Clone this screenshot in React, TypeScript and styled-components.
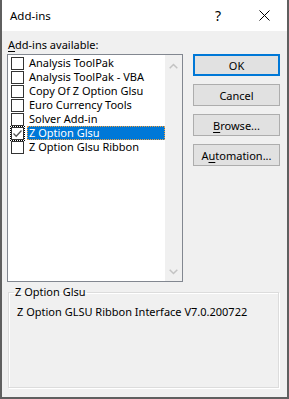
import React from "react";
import styled, { createGlobalStyle } from "styled-components";

const Global = createGlobalStyle`
  html, body { margin: 0; padding: 0; background: #5f5f5f; }
  * { box-sizing: border-box; }
`;

const FONT = `"Noto Sans", "Open Sans", Arial, sans-serif`;

const Window = styled.div`
  width: 289px;
  height: 399px;
  border: 2px solid #5f5f5f;
  border-top: none;
  display: flex;
  flex-direction: column;
  background: #f0f0f0;
  font-family: ${FONT};
  font-size: 11px;
  color: #000;
`;

const TitleBar = styled.div`
  height: 31px;
  background: #fff;
  display: flex;
  align-items: center;
  padding-left: 8px;
`;

const Title = styled.div`
  flex: 1;
  font-size: 11.5px;
  padding-bottom: 1px;
`;

const TitleButton = styled.div<{ $w: number }>`
  width: ${(p) => p.$w}px;
  height: 31px;
  display: flex;
  align-items: center;
  justify-content: center;
  font-size: 14px;
  color: #000;
`;

const Content = styled.div`
  flex: 1;
  display: flex;
  flex-direction: column;
  padding: 6px 7px 0 5px;
`;

const Label = styled.div`
  line-height: 16px;
  height: 16px;
  padding-left: 1px;
`;

const Underline = styled.span`
  text-decoration: underline;
  text-underline-offset: 2px;
`;

const MainRow = styled.div`
  display: flex;
  margin-top: 1px;
  gap: 10px;
`;

const ListBox = styled.div`
  width: 176px;
  height: 228px;
  border: 1px solid #828790;
  background: #fff;
  display: flex;
`;

const Items = styled.div`
  flex: 1;
  padding-top: 1px;
  padding-left: 3px;
  display: flex;
  flex-direction: column;
`;

const Row = styled.div`
  height: 14px;
  display: flex;
  align-items: center;
`;

const CheckBox = styled.div<{ $focus?: boolean }>`
  width: 13px;
  height: 13px;
  border: 1px solid #333;
  background: #fff;
  display: flex;
  align-items: center;
  justify-content: center;
  outline: ${(p) => (p.$focus ? "1px dotted #000" : "none")};
  outline-offset: 0px;
`;

const ItemText = styled.div<{ $selected?: boolean }>`
  margin-left: 3px;
  height: 14px;
  line-height: 14px;
  padding: 0 2px;
  background: ${(p) => (p.$selected ? "#0078d7" : "transparent")};
  color: ${(p) => (p.$selected ? "#fff" : "#000")};
  outline: ${(p) => (p.$selected ? "1px dotted #f0a040" : "none")};
  outline-offset: -1px;
  flex: ${(p) => (p.$selected ? 1 : "none")};
  white-space: nowrap;
`;

const ScrollBar = styled.div`
  width: 17px;
  background: #f0f0f0;
  display: flex;
  flex-direction: column;
  justify-content: space-between;
  align-items: center;
  padding: 8px 0 6px;
`;

const Buttons = styled.div`
  display: flex;
  flex-direction: column;
  gap: 8px;
`;

const Button = styled.div<{ $default?: boolean }>`
  width: 87px;
  height: 22px;
  background: #e1e1e1;
  border: ${(p) => (p.$default ? "2px solid #0078d7" : "1px solid #adadad")};
  display: flex;
  align-items: center;
  justify-content: center;
  font-size: 11px;
`;

const Group = styled.fieldset`
  margin: 3px 1px 0 1px;
  padding: 5px 8px 0 8px;
  height: 103px;
  border: 1px solid #dcdcdc;
  box-shadow: inset 1px 1px 0 #fff, 1px 1px 0 #fff;
`;

const Legend = styled.legend`
  padding: 0 1px 0 1px;
  margin-left: -3px;
  line-height: 14px;
  font-size: 11px;
`;

const Description = styled.div`
  line-height: 16px;
`;

const Chevron = ({ up }: { up?: boolean }) => (
  <svg width="9" height="6" viewBox="0 0 9 6">
    <path
      d={up ? "M0.7 5.3 L4.5 1.5 L8.3 5.3" : "M0.7 0.7 L4.5 4.5 L8.3 0.7"}
      fill="none"
      stroke="#c3c3c3"
      strokeWidth="1.5"
    />
  </svg>
);

const items = [
  "Analysis ToolPak",
  "Analysis ToolPak - VBA",
  "Copy Of Z Option Glsu",
  "Euro Currency Tools",
  "Solver Add-in",
  "Z Option Glsu",
  "Z Option Glsu Ribbon",
];

export default function App() {
  return (
    <>
      <Global />
      <Window>
        <TitleBar>
          <Title>Add-ins</Title>
          <TitleButton $w={46}>?</TitleButton>
          <TitleButton $w={46}>
            <svg width="11" height="11" viewBox="0 0 11 11">
              <path d="M0.5 0.5 L10.5 10.5 M10.5 0.5 L0.5 10.5" stroke="#000" strokeWidth="1" />
            </svg>
          </TitleButton>
        </TitleBar>
        <Content>
          <Label>
            <Underline>A</Underline>dd-ins available:
          </Label>
          <MainRow>
            <ListBox>
              <Items>
                {items.map((t, i) => {
                  const sel = i === 5;
                  return (
                    <Row key={t}>
                      <CheckBox $focus={sel}>
                        {sel && (
                          <svg width="11" height="11" viewBox="0 0 11 11">
                            <path d="M1.5 5.5 L4.2 8.2 L9.5 2.5" fill="none" stroke="#555" strokeWidth="1.3" />
                          </svg>
                        )}
                      </CheckBox>
                      <ItemText $selected={sel}>{t}</ItemText>
                    </Row>
                  );
                })}
              </Items>
              <ScrollBar>
                <Chevron up />
                <Chevron />
              </ScrollBar>
            </ListBox>
            <Buttons>
              <Button $default>OK</Button>
              <Button>Cancel</Button>
              <Button>
                <span>
                  <Underline>B</Underline>rowse...
                </span>
              </Button>
              <Button>
                <span>
                  A<Underline>u</Underline>tomation...
                </span>
              </Button>
            </Buttons>
          </MainRow>
          <Group>
            <Legend>Z Option Glsu</Legend>
            <Description>Z Option GLSU Ribbon Interface V7.0.200722</Description>
          </Group>
        </Content>
      </Window>
    </>
  );
}
